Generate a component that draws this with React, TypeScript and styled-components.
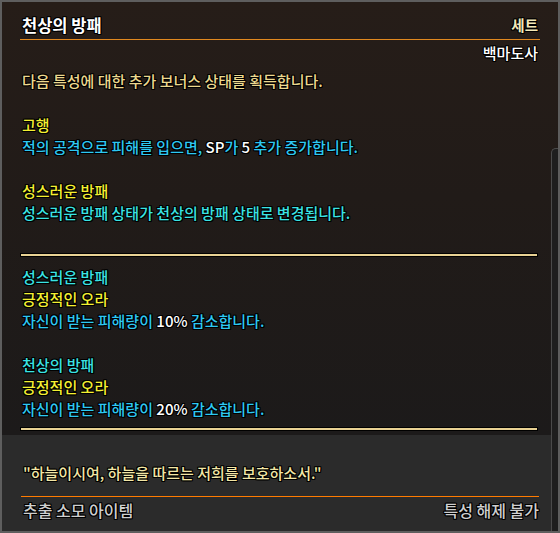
import React from "react";
import styled, { createGlobalStyle } from "styled-components";

const Global = createGlobalStyle`
  html, body { margin: 0; padding: 0; background: #1c1a1a; }
  * { box-sizing: border-box; }
`;

const outline = `
  text-shadow: -1px 0 #000, 1px 0 #000, 0 -1px #000, 0 1px #000,
    -1px -1px #000, 1px 1px #000, -1px 1px #000, 1px -1px #000;
`;

const Frame = styled.div`
  position: relative;
  width: 560px;
  height: 533px;
  border: 2px solid #5e5e5e;
  display: flex;
  flex-direction: column;
  font-family: "Noto Sans CJK KR", "Noto Sans", sans-serif;
  font-size: 15px;
  font-weight: 500;
  line-height: 22px;
  overflow: hidden;
`;

const Upper = styled.div`
  flex: 0 0 433px;
  background: linear-gradient(180deg, #261d18 0%, #211b18 45%, #1c1a1a 100%);
  padding: 12px 18px 0 18px;
  display: flex;
  flex-direction: column;
`;

const Lower = styled.div`
  flex: 1;
  background: #2b2b2b;
  padding: 27px 19px 0 18px;
  display: flex;
  flex-direction: column;
`;

const HeadRow = styled.div`
  display: flex;
  justify-content: space-between;
  align-items: center;
  height: 22px;
  padding: 0 2px 0 2px;
`;

const Title = styled.div`
  color: #ffffff;
  font-size: 16.5px;
  font-weight: 700;
  ${outline}
`;

const SetLabel = styled.div`
  color: #f3e9b8;
  font-size: 14.5px;
  font-weight: 700;
  ${outline}
`;

const OrangeRule = styled.div<{ $bright?: boolean }>`
  height: 1px;
  background: ${(p) => (p.$bright ? "#ff7b00" : "#e2891f")};
  margin: ${(p) => (p.$bright ? "12px 0 2px 1px" : "3px 0 2px 0")};
`;

const ClassRow = styled.div`
  text-align: right;
  color: #ffffff;
  font-size: 15px;
  padding-right: 2px;
  height: 22px;
  ${outline}
`;

const Body = styled.div`
  padding: 6px 3px 0 2px;
  display: flex;
  flex-direction: column;
`;

const Line = styled.div<{ $c: string }>`
  color: ${(p) => p.$c};
  height: 22px;
  white-space: nowrap;
  ${outline}
`;

const Blank = styled.div`
  height: 22px;
`;

const W = styled.span`
  color: #ffffff;
`;

const BeigeRule = styled.div<{ $mt: number; $mb: number }>`
  height: 2px;
  background: #e8d193;
  box-shadow: 0 0 0 1px #000;
  margin: ${(p) => `${p.$mt}px 3px ${p.$mb}px 1px`};
`;

const Quote = styled.div`
  color: #f2e6a6;
  height: 22px;
  padding-left: 3px;
  ${outline}
`;

const Footer = styled.div`
  display: flex;
  justify-content: space-between;
  height: 22px;
  font-size: 16px;
  color: #cfcfcf;
  padding: 0 0 0 3px;
  ${outline}
`;

const Scroll = styled.div`
  position: absolute;
  right: 0;
  top: 146px;
  bottom: 0;
  width: 7px;
  background: #1e1e1e;
  border-left: 1px solid #4a4a4a;
  border-top: 1px solid #4a4a4a;
  border-top-left-radius: 5px;
`;

const YEL = "#f5f032";
const CYAN = "#2ec8f2";
const AQUA = "#3be3e3";
const BEIGE = "#ecd88e";

export default function App() {
  return (
    <>
      <Global />
      <Frame>
        <Upper>
          <HeadRow>
            <Title>천상의 방패</Title>
            <SetLabel>세트</SetLabel>
          </HeadRow>
          <OrangeRule />
          <ClassRow>백마도사</ClassRow>
          <Body>
            <Line $c={BEIGE}>다음 특성에 대한 추가 보너스 상태를 획득합니다.</Line>
            <Blank />
            <Line $c={YEL}>고행</Line>
            <Line $c={CYAN}>
              적의 공격으로 피해를 입으면, <W>SP</W>가 <W>5</W> 추가 증가합니다.
            </Line>
            <Blank />
            <Line $c={YEL}>성스러운 방패</Line>
            <Line $c={AQUA}>성스러운 방패 상태가 천상의 방패 상태로 변경됩니다.</Line>
          </Body>
          <BeigeRule $mt={30} $mb={10} />
          <Body style={{ paddingTop: 0 }}>
            <Line $c={AQUA}>성스러운 방패</Line>
            <Line $c={YEL}>긍정적인 오라</Line>
            <Line $c={CYAN}>
              자신이 받는 피해량이 <W>10%</W> 감소합니다.
            </Line>
            <Blank />
            <Line $c={AQUA}>천상의 방패</Line>
            <Line $c={YEL}>긍정적인 오라</Line>
            <Line $c={CYAN}>
              자신이 받는 피해량이 <W>20%</W> 감소합니다.
            </Line>
          </Body>
          <BeigeRule $mt={8} $mb={0} />
        </Upper>
        <Lower>
          <Quote>"하늘이시여, 하늘을 따르는 저희를 보호하소서."</Quote>
          <OrangeRule $bright />
          <Footer>
            <span>추출 소모 아이템</span>
            <span>특성 해제 불가</span>
          </Footer>
        </Lower>
        <Scroll />
      </Frame>
    </>
  );
}
